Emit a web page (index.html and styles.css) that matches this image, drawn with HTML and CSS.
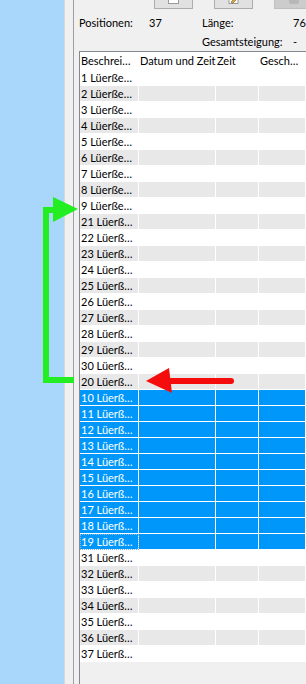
FILE: index.html
```html
<!DOCTYPE html>
<html lang="de">
<head>
    <meta charset="UTF-8">
    <meta name="viewport" content="width=device-width, initial-scale=1.0">
    <title>Positionen</title>
    <link rel="stylesheet" href="styles.css">
</head>
<body>
    <div class="side"></div>
    <div class="gutter"></div>
    <div class="main">
        <div class="toolbar">
            <button class="tool"><span class="icon-new"></span></button>
            <button class="tool">
                <svg class="icon-edit" width="12" height="12" viewBox="0 0 12 12">
                    <rect x="1" y="0.5" width="9" height="11" fill="#fff" stroke="#9a9a9a" />
                    <path d="M3 10 L9 4 L10.5 5.5 L4.5 11.5 Z" fill="#d9a441" stroke="#8a6a2a" stroke-width="0.7" />
                </svg>
            </button>
            <button class="tool" disabled><span class="icon-del"></span></button>
        </div>

        <div class="stats">
            <span>Positionen:</span><span>37</span><span>Länge:</span><span>76</span>
            <span></span><span></span><span>Gesamtsteigung:</span><span>-</span>
        </div>

        <div class="list">
            <div class="row head"><div>Beschrei…</div><div>Datum und Zeit</div><div>Zeit</div><div>Gesch…</div></div>
            <div class="row"><div>1 Lüerße…</div><div></div><div></div><div></div></div>
            <div class="row"><div>2 Lüerße…</div><div></div><div></div><div></div></div>
            <div class="row"><div>3 Lüerße…</div><div></div><div></div><div></div></div>
            <div class="row"><div>4 Lüerße…</div><div></div><div></div><div></div></div>
            <div class="row"><div>5 Lüerße…</div><div></div><div></div><div></div></div>
            <div class="row"><div>6 Lüerße…</div><div></div><div></div><div></div></div>
            <div class="row"><div>7 Lüerße…</div><div></div><div></div><div></div></div>
            <div class="row"><div>8 Lüerße…</div><div></div><div></div><div></div></div>
            <div class="row"><div>9 Lüerße…</div><div></div><div></div><div></div></div>
            <div class="row"><div>21 Lüerß…</div><div></div><div></div><div></div></div>
            <div class="row"><div>22 Lüerß…</div><div></div><div></div><div></div></div>
            <div class="row"><div>23 Lüerß…</div><div></div><div></div><div></div></div>
            <div class="row"><div>24 Lüerß…</div><div></div><div></div><div></div></div>
            <div class="row"><div>25 Lüerß…</div><div></div><div></div><div></div></div>
            <div class="row"><div>26 Lüerß…</div><div></div><div></div><div></div></div>
            <div class="row"><div>27 Lüerß…</div><div></div><div></div><div></div></div>
            <div class="row"><div>28 Lüerß…</div><div></div><div></div><div></div></div>
            <div class="row"><div>29 Lüerß…</div><div></div><div></div><div></div></div>
            <div class="row"><div>30 Lüerß…</div><div></div><div></div><div></div></div>
            <div class="row"><div>20 Lüerß…</div><div></div><div></div><div></div></div>
            <div class="row selected"><div>10 Lüerß…</div><div></div><div></div><div></div></div>
            <div class="row selected"><div>11 Lüerß…</div><div></div><div></div><div></div></div>
            <div class="row selected"><div>12 Lüerß…</div><div></div><div></div><div></div></div>
            <div class="row selected"><div>13 Lüerß…</div><div></div><div></div><div></div></div>
            <div class="row selected"><div>14 Lüerß…</div><div></div><div></div><div></div></div>
            <div class="row selected"><div>15 Lüerß…</div><div></div><div></div><div></div></div>
            <div class="row selected"><div>16 Lüerß…</div><div></div><div></div><div></div></div>
            <div class="row selected"><div>17 Lüerß…</div><div></div><div></div><div></div></div>
            <div class="row selected"><div>18 Lüerß…</div><div></div><div></div><div></div></div>
            <div class="row selected focused"><div>19 Lüerß…</div><div></div><div></div><div></div></div>
            <div class="row"><div>31 Lüerß…</div><div></div><div></div><div></div></div>
            <div class="row"><div>32 Lüerß…</div><div></div><div></div><div></div></div>
            <div class="row"><div>33 Lüerß…</div><div></div><div></div><div></div></div>
            <div class="row"><div>34 Lüerß…</div><div></div><div></div><div></div></div>
            <div class="row"><div>35 Lüerß…</div><div></div><div></div><div></div></div>
            <div class="row"><div>36 Lüerß…</div><div></div><div></div><div></div></div>
            <div class="row"><div>37 Lüerß…</div><div></div><div></div><div></div></div>
        </div>
    </div>

    <!-- annotation arrows drawn over the screenshot -->
    <svg class="marks" width="306" height="684" viewBox="0 0 306 684">
        <polyline points="74,380 46,380 46,210 56,210" fill="none" stroke="#22ee22" stroke-width="6" />
        <polygon points="53,197 78,209 53,222" fill="#22ee22" />
        <line x1="168" y1="381" x2="231" y2="381" stroke="#f50c0c" stroke-width="6" stroke-linecap="round" />
        <polygon points="146,381 169,368 172,393" fill="#f50c0c" />
    </svg>
</body>
</html>
```

FILE: styles.css
```css
body {
    margin: 0;
    width: 306px;
    height: 684px;
    overflow: hidden;
    display: flex;
    font-family: Lato, "Liberation Sans", sans-serif;
    font-size: 11px;
    color: #000;
    background-color: #f0f0f0;
    position: relative;
}

.side {
    width: 64px;
    flex-shrink: 0;
    background-color: #a9d6fb;
}

.gutter {
    width: 8px;
    flex-shrink: 0;
    background-color: #f0f0f0;
    border-left: 1px solid #d9d9d9;
    border-right: 1px solid #a0a0a0;
}

.main {
    flex: 1;
    min-width: 0;
    padding-left: 5px;
    display: flex;
    flex-direction: column;
    overflow: hidden;
}

.toolbar {
    height: 9px;
    flex-shrink: 0;
    overflow: hidden;
    display: flex;
    align-items: flex-end;
    gap: 21px;
    padding-left: 75px;
}

.tool {
    width: 39px;
    height: 24px;
    flex-shrink: 0;
    padding: 0 0 4px;
    background-color: #e1e1e1;
    border: 1px solid #adadad;
    display: flex;
    justify-content: center;
    align-items: flex-end;
}

.tool:disabled {
    background-color: #cccccc;
    border-color: #bfbfbf;
}

.icon-new {
    width: 9px;
    height: 12px;
    background-color: #fff;
    border: 1px solid #9a9a9a;
}

.icon-edit {
    display: block;
}

.icon-del {
    width: 10px;
    height: 12px;
    background-color: #b8b8b8;
    border-radius: 2px;
}

.stats {
    margin-top: 4px;
    flex-shrink: 0;
    display: grid;
    grid-template-columns: 70px 53px 91px auto;
    grid-auto-rows: 19px;
    align-items: center;
    white-space: nowrap;
}

.list {
    flex: 1;
    border-left: 1px solid #828790;
    border-top: 1px solid #828790;
}

.row {
    display: grid;
    grid-template-columns: 59px 77px 43px 1fr;
    height: 16px;
    background-color: #fff;
}

.row > div {
    border-right: 1px solid #fff;
    border-bottom: 1px solid #fff;
    padding-left: 1px;
    line-height: 15px;
    white-space: nowrap;
    overflow: hidden;
}

.row:nth-child(odd) {
    background-color: #e8e8e8;
}

.row.head {
    height: 18px;
    background-color: #fff;
}

.row.head > div {
    line-height: 18px;
    border: none;
    overflow: visible;
}

.row.selected {
    background-color: #0097fb;
    color: #fff;
}

.row.focused > div:first-child {
    outline: 1px dotted #7fb8e6;
    outline-offset: -1px;
}

.marks {
    position: absolute;
    left: 0;
    top: 0;
    pointer-events: none;
}
```
